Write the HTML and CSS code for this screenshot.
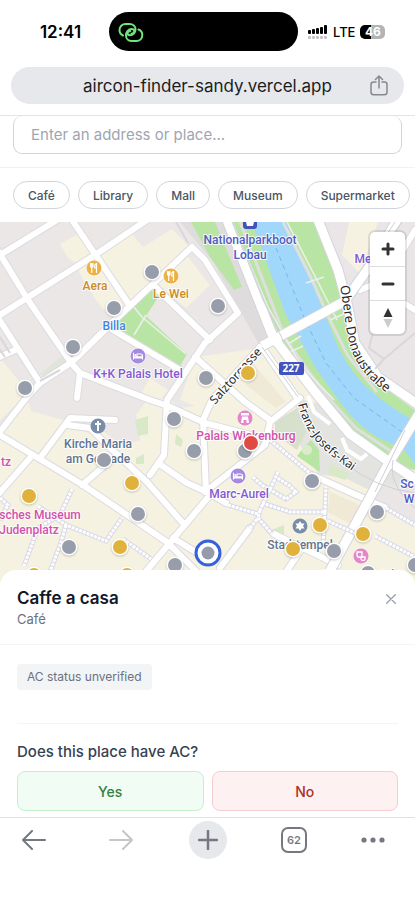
FILE: index.html
```html
<!DOCTYPE html>
<html lang="en">
<head>
<meta charset="utf-8">
<meta name="viewport" content="width=device-width, initial-scale=1">
<title>Aircon Finder</title>
<link rel="stylesheet" href="styles.css">
</head>
<body>
<div class="status">
  <time class="clock">12:41</time>
  <div class="island">
    <svg width="26" height="22" viewBox="0 0 26 22" fill="none" stroke="#6fe57c" stroke-width="2" stroke-linecap="round" aria-hidden="true">
      <path d="M5 13.500C2.800 12.500 1.500 10.400 1.500 8C1.500 4.500 4.200 2 7.500 2H11.500C15 2 17.500 4.300 17.500 7.500S15 13.300 12 13.300C10.300 13.300 9.500 12.500 9.500 11.300C9.500 9.800 10.800 9.200 12.300 9"/>
      <path d="M20.500 7.500C22.800 8.300 24.300 10.400 24.300 13C24.300 16.500 21.700 19 18.300 19H14C10.500 19 8 16.600 8 13.400C8 10 10.500 7 13.500 7C15.200 7 16.300 7.800 16.300 9.200C16.300 10.700 15 11.500 13.500 11.700"/>
    </svg>
  </div>
  <div class="signals">
    <svg width="20" height="14" viewBox="0 0 20 14" aria-hidden="true">
      <g fill="#000"><rect y="5" width="3" height="4" rx="1"/><rect x="4" y="4" width="3" height="5" rx="1"/><rect x="8" y="3" width="3" height="6" rx="1"/><rect x="12" y="2" width="3" height="7" rx="1"/><rect x="16" y="0" width="3" height="9" rx="1"/></g>
      <g fill="#c4c4c4"><rect y="11" width="3" height="3" rx="1"/><rect x="4" y="11" width="3" height="3" rx="1"/><rect x="8" y="11" width="3" height="3" rx="1"/><rect x="12" y="11" width="3" height="3" rx="1"/><rect x="16" y="11" width="3" height="3" rx="1"/></g>
    </svg>
    <span class="lte">LTE</span>
    <span class="battery">46</span>
  </div>
</div>
<div class="address">
  <span class="url">aircon-finder-sandy.vercel.app</span>
  <button class="share" type="button" aria-label="Share">
    <svg width="18" height="21" viewBox="0 0 18 21" fill="none" stroke="#85888d" stroke-width="1.500" stroke-linecap="round" stroke-linejoin="round"><path d="M6 7H3.500C2 7 1 8 1 9.500V17C1 18.700 2 19.800 3.700 19.800H14.300C16 19.800 17 18.700 17 17V9.500C17 8 16 7 14.500 7H12M9 13V1.200M5.500 4.500L9 1L12.500 4.500"/></svg>
  </button>
</div>
<form class="search">
  <input class="search-box" type="search" placeholder="Enter an address or place..." aria-label="Address or place">
</form>
<div class="chips">
  <button class="chip" type="button">Café</button>
  <button class="chip" type="button">Library</button>
  <button class="chip" type="button">Mall</button>
  <button class="chip" type="button">Museum</button>
  <button class="chip" type="button">Supermarket</button>
</div>
<main class="map">
<svg class="map-art" viewBox="0 222 415 366" preserveAspectRatio="xMidYMin slice" role="img" aria-label="Map">
  <defs>
    <g id="food"><circle r="8" fill="#fff"/><circle r="7.500" fill="#ecb146"/><path d="M-3.500-4.500V-2C-3.500 0-1 0-1-2V-4.500M-2.250-4.500V4.500M2.500 4.500V-4.500C1-4 .5-2 .8 0H2.500" fill="none" stroke="#fff" stroke-width="1.200" stroke-linecap="round"/></g>
    <g id="bed"><circle r="8" fill="#fff"/><circle r="7.500" fill="#a58ae0"/><path d="M-4.500-3V3M-4.500 2H4.500V3M4.500 2V0C4.500-1.500 3.500-2 2.500-2H-1V2M-4.500 .8H4.500" fill="none" stroke="#fff" stroke-width="1.200" stroke-linecap="round"/><circle cx="-2.700" cy="-1" r="1" fill="#fff"/></g>
    <path id="obere" d="M340 286C345 310 345 337 354 356C362 373 374 384 394 398"/>
    <path id="kai" d="M298 404C302 420 307 430 318 443C328 454 339 462 357 474"/>
    <path id="salz" d="M215 405L266 348"/>
    <path id="roads" d="M-5 258L57 220M-5 318L95 255L147 220M72 220L128 303M-5 246L28 300L72 364L80 373L150 400L168 406L205 423L270 440M40 383L72 362L115 320L192 247M40 383L27 397L-5 438M-5 313L40 383M153 285L210 340M113 330L180 370M192 247L205 260L238 313L205 343L167 400L164 455L150 475M195 357L245 402L270 420M80 373L77 398M-5 359L15 350M260 347L212 400L203 420L206 492M-5 432L83 485L167 542L200 575M-5 498L30 458M40 458L70 418L115 420M67 425L90 428L107 445L147 482L182 522M82 485L103 467M210 495L143 575M158 463L187 483L207 492L226 503M173 538L212 562M205 492L265 445L270 422L300 398M312 475L372 502L386 508M250 528L220 568M274 534L338 565M302 548L284 575M262 347L298 399M372 284L415 310M415 230L385 280L360 290"/>
    <path id="walks" d="M72 489L60 515L38 528L24 566M38 506L66 525L106 541L122 518M66 525L60 545L50 572M123 539L151 559M0 498L8 505L0 520M270 440L312 475M278 472L274 481L260 510M253 477L262 485L286 499L296 492L290 486L276 477M228 505L258 514M262 503L290 512H325L326 487M325 512L323 545M328 521L357 534M260 510L258 518L272 534M250 528L258 518M386 508L415 525M375 536L415 557"/>
  </defs>
  <rect y="222" width="415" height="366" fill="#f6f2e1"/>
  <path fill="#ebe7e6" d="M0 222H200L262 348L208 404L180 408L170 400L150 396L136 415L140 440L122 446L104 432L88 433L70 422L31 411L27 397L0 432Z"/>
  <path fill="#f6f2e1" d="M60 244L82 232L128 303L112 320L96 300L82 277L74 262L68 258ZM96 252L130 232L143 247L172 229L190 247L153 284L128 303ZM170 272L188 257L210 285L186 308L158 284ZM0 358L18 380L32 390L0 420ZM195 357L262 348L205 410L180 400ZM150 378L168 390L158 403L140 395Z"/>
  <path fill="#dfe5d9" d="M40 374L62 356L68 365L50 379Z"/>
  <path fill="#e3e4df" d="M296 398L320 404L345 435L390 468L415 482V505L365 488L345 478L318 474L297 440Z"/>
  <path fill="#d7dfcd" d="M275 422L297 408L306 432L297 450L275 434Z"/>
  <path fill="#eae5e6" d="M315 222H415V405L378 388L355 350L347 305Z"/>
  <path fill="#f6f2e1" d="M349 222H378L360 274L342 255Z"/>
  <path fill="#efe9d6" d="M330 492L372 510L358 528L328 512ZM252 362L286 402L276 408L246 385Z"/>
  <path fill="#e9e6e5" d="M372 480L415 490V525L368 500Z"/>
  <path fill="#dfdcde" d="M180 222H226L280 340L262 350L213 262Z"/>
  <path fill="#b9e5a4" d="M191 222H215L242 287L234 290L210 257ZM118 318L152 290L159 296L146 316L187 354L179 368L112 330Z"/>
  <path fill="#d9e8c7" d="M135 420L148 416V434L138 436ZM136 458L144 454V464H136ZM176 434L183 440L181 447L175 444ZM266 532L284 525V535ZM330 464L350 474L345 480L328 474Z"/>
  <path fill="#b9e5a4" d="M300 452L311 440L319 450L320 472L297 456Z"/>
  <circle cx="307" cy="450" r="5" fill="#dcebc9"/>
  <path fill="#b9e5a4" d="M229 222H320L345 300L353 348L376 382L415 410V470L388 464L345 425L315 396L280 338Z"/>
  <path fill="#a0d7fa" d="M252 222H286L315 290L338 347C350 370 365 394 415 421V464L402 447C375 440 355 424 335 395L315 367L285 313Z"/>
  <path fill="none" stroke="#79b8e8" stroke-dasharray="5 4" d="M276 248L306 322L326 363L354 398L402 432"/>
  <path fill="none" stroke="#dfdfdf" stroke-width="3" d="M283 222L312 280L331 322L348 356L377 392M240 222L262 278L286 340L325 394L356 428L398 456"/>
  <path fill="none" stroke="#eee" stroke-width="1.500" d="M287 222L318 282L337 320M232 222L268 307L300 364L334 400M306 283L324 277M330 320L344 314M288 344L301 336M290 352L303 346M146 315L134 335M133 306L142 317L186 354"/>
  <g fill="none" stroke-linecap="round" stroke-linejoin="round">
    <use href="#roads" stroke="#dcdbe1" stroke-width="8"/>
    <use href="#roads" stroke="#fff" stroke-width="6"/>
  </g>
  <g fill="none" stroke-linejoin="round">
    <path stroke="#d5d4dd" stroke-width="11" d="M225 215L273 337L315 392L350 434L392 464L420 482M316 215L338 270L348 307L355 343L378 377L420 406M262 346L345 301L372 263L400 215M420 412L386 468L325 580"/>
    <path stroke="#fff" stroke-width="9" d="M225 215L273 337L315 392L350 434L392 464L420 482M316 215L338 270L348 307L355 343L378 377L420 406M262 346L345 301L372 263L400 215M420 412L386 468L325 580"/>
    <path stroke="#fff" stroke-width="4" d="M308 396L314 412L330 424M342 438L347 450L361 459L367 454"/>
    <path stroke="#d1cfd7" d="M232 222L263 300L284 342M262 347L298 397M345 463Q375 488 415 493M393 460Q388 485 415 508M405 430L375 492M372 263L402 222M368 264L395 222"/>
    <path stroke="#dad7db" stroke-width="2" d="M374 328L369 348L384 359L415 333M384 359L375 369M60 370L40 381M0 337L10 353M-2 347L5 357M176 222L188 243"/>
  </g>
  <use href="#walks" fill="none" stroke="#d9d9e8" stroke-width="5"/>
  <use href="#walks" fill="none" stroke="#fff" stroke-width="3" stroke-dasharray="3 1"/>

  <g><rect x="243" y="216" width="14" height="13" rx="3" fill="#4253bd"/><path d="M246 222H254L253 226H247Z" fill="#fff"/></g>
  <use href="#food" x="94" y="268"/><use href="#food" x="171" y="276"/>
  <use href="#bed" x="138" y="356"/><use href="#bed" x="238" y="476"/>
  <circle cx="98" cy="426" r="7.500" fill="#778da8"/><path d="M98 421V431M95 424H101" stroke="#fff" stroke-width="2"/>
  <circle cx="245" cy="418" r="7.500" fill="#e386ca"/><path d="M241 413H249V415.500H241ZM242 416.500H248L249 423H246.500V420H243.500V423H241Z" fill="#fff"/>
  <circle cx="300" cy="526" r="7.500" fill="#778da8"/><path d="M300 521L301.500 523.500H304.500L303 526L304.500 528.500H301.500L300 531L298.500 528.500H295.500L297 526L295.500 523.500H298.500Z" fill="#fff"/>
  <circle cx="361" cy="556" r="7.500" fill="#e386ca"/><path d="M357 552H362V555C362 558 357 558 357 555ZM361 557H365V559C365 561 361 561 361 559Z" fill="none" stroke="#fff" stroke-width="1.300"/>
  <rect x="279" y="362" width="25" height="13" rx="2" fill="#4253bd"/>

  <g class="label" text-anchor="middle">
    <text class="transit" x="250" y="244">Nationalparkboot</text><text class="transit" x="250" y="259">Lobau</text>
    <text class="food" x="95" y="290">Aera</text><text class="food" x="171" y="298">Le Wei</text>
    <text class="shop" x="114" y="330">Billa</text>
    <text class="hotel" x="138" y="378">K+K Palais Hotel</text><text class="hotel" x="239" y="498">Marc-Aurel</text>
    <text class="hotel" x="363" y="263">Me</text>
    <text class="church" x="98" y="448">Kirche Maria</text><text class="church" x="98" y="463">am Gestade</text>
    <text class="church" x="300" y="549">Stadttempel</text>
    <text class="museum" x="246" y="440">Palais Wickenburg</text>
    <text class="museum" x="6" y="466">tz</text>
    <text class="museum" x="40" y="519">sches Museum</text><text class="museum" x="29" y="534">Judenplatz</text>
    <text class="museum" x="362" y="579">Kammerspiele</text>
    <text class="transit" x="407" y="488">Sc</text><text class="transit" x="409" y="503">W</text>
  </g>
  <g class="street">
    <text><textPath href="#obere">Obere Donaustraße</textPath></text>
    <text class="small"><textPath href="#kai">Franz-Josefs-Kai</textPath></text>
    <text class="small"><textPath href="#salz">Salztorgasse</textPath></text>
  </g>
  <text class="shield" x="291" y="372" text-anchor="middle">227</text>

  <g class="pins">
    <g class="unknown"><circle cx="152" cy="272" r="7"/><circle cx="114" cy="308" r="7"/><circle cx="218" cy="306" r="7"/><circle cx="73" cy="347" r="7"/><circle cx="25" cy="388" r="7"/><circle cx="206" cy="378" r="7"/><circle cx="174" cy="419" r="7"/><circle cx="194" cy="451" r="7"/><circle cx="245" cy="451" r="7"/><circle cx="104" cy="460" r="7"/><circle cx="312" cy="481" r="7"/><circle cx="138" cy="514" r="7"/><circle cx="377" cy="512" r="7"/><circle cx="69" cy="547" r="7"/><circle cx="334" cy="551" r="7"/><circle cx="175" cy="565" r="7"/><circle cx="368" cy="573" r="7"/><circle cx="415" cy="565" r="7"/></g>
    <g class="cool"><circle cx="248" cy="373" r="7"/><circle cx="132" cy="483" r="7"/><circle cx="29" cy="496" r="7"/><circle cx="120" cy="547" r="7"/><circle cx="320" cy="525" r="7"/><circle cx="363" cy="534" r="7"/><circle cx="293" cy="549" r="7"/><circle cx="34" cy="575" r="7"/><circle cx="127" cy="575" r="7"/></g>
    <circle class="warm" cx="251" cy="443" r="7"/>
    <circle cx="208" cy="553" r="12" fill="#fff" stroke="#3561dc" stroke-width="3"/><circle cx="208" cy="553" r="6.500" fill="#969ba9"/>
  </g>
</svg>
<div class="zoom">
  <button type="button" aria-label="Zoom in"><svg width="16" height="16" viewBox="0 0 16 16"><path d="M8 3V13M3 8H13" stroke="#333" stroke-width="3" stroke-linecap="round"/></svg></button>
  <button type="button" aria-label="Zoom out"><svg width="16" height="16" viewBox="0 0 16 16"><path d="M3 8H13" stroke="#333" stroke-width="3" stroke-linecap="round"/></svg></button>
  <button type="button" aria-label="Reset north"><svg width="10" height="22" viewBox="0 0 10 22"><path d="M.5 10L5 1L9.500 10Z" fill="#333"/><path d="M.5 12L5 21L9.500 12Z" fill="#ccc"/></svg></button>
</div>
</main>
<section class="sheet">
  <header class="sheet-head">
    <div>
      <h1>Caffe a casa</h1>
      <p class="kind">Café</p>
    </div>
    <button class="close" type="button" aria-label="Close"><svg width="10" height="10" viewBox="0 0 10 10"><path d="M.7 .7L9.300 9.300M9.300 .7L.7 9.300" stroke="#989ea9" stroke-width="1.300" stroke-linecap="round"/></svg></button>
  </header>
  <div class="sheet-body">
    <span class="badge">AC status unverified</span>
    <div class="vote">
      <h2>Does this place have AC?</h2>
      <div class="answers">
        <button class="yes" type="button">Yes</button>
        <button class="no" type="button">No</button>
      </div>
    </div>
  </div>
</section>
<nav class="toolbar">
  <button type="button" aria-label="Back"><svg width="24" height="20" viewBox="0 0 24 20" fill="none" stroke="#75797f" stroke-width="2" stroke-linecap="round" stroke-linejoin="round"><path d="M23 10H1M10 1L1 10L10 19"/></svg></button>
  <button type="button" aria-label="Forward"><svg width="24" height="20" viewBox="0 0 24 20" fill="none" stroke="#c5c6c8" stroke-width="2" stroke-linecap="round" stroke-linejoin="round"><path d="M1 10H23M14 1L23 10L14 19"/></svg></button>
  <button class="add" type="button" aria-label="New tab"><svg width="20" height="20" viewBox="0 0 20 20"><path d="M10 1V19M1 10H19" stroke="#75797f" stroke-width="2.500" stroke-linecap="round"/></svg></button>
  <button type="button" aria-label="Tabs"><span class="tabs">62</span></button>
  <button class="more" type="button" aria-label="More"><svg width="24" height="6" viewBox="0 0 24 6" fill="#75797f"><circle cx="3" cy="3" r="2.600"/><circle cx="12" cy="3" r="2.600"/><circle cx="21" cy="3" r="2.600"/></svg></button>
</nav>
</body>
</html>
```
FILE: styles.css
```css
* { box-sizing: border-box; }
body {
  margin: 0;
  min-height: 100vh;
  display: flex;
  flex-direction: column;
  background: #fff;
  font-family: Inter, "Liberation Sans", sans-serif;
  color: #374151;
}
button {
  font: inherit;
  padding: 0;
  border: 0;
  background: none;
  color: inherit;
}
svg { display: block; flex: none; }
h1, h2, p { margin: 0; }

.status {
  display: grid;
  grid-template-columns: 1fr 189px 1fr;
  align-items: center;
  padding: 12px 8px 12px 0;
}
.clock {
  padding-left: 12px;
  text-align: center;
  font-size: 17px;
  font-weight: 600;
  color: #000;
}
.island {
  height: 39px;
  padding: 10px 9px;
  border-radius: 20px;
  background: #000;
}
.signals {
  display: flex;
  align-items: center;
  gap: 5px;
  padding-left: 10px;
}
.lte {
  font-size: 13px;
  font-weight: 500;
  color: #000;
}
.battery {
  width: 25px;
  height: 14px;
  border-radius: 5px;
  background: linear-gradient(90deg, #000 46%, #b4b4b4 46%);
  color: #fff;
  font-size: 12px;
  line-height: 14px;
  font-weight: 700;
  text-align: center;
}

.address {
  display: grid;
  grid-template-columns: 18px 1fr 18px;
  align-items: center;
  height: 37px;
  margin: 4px 11px 11px;
  padding: 0 16px;
  border-radius: 19px;
  background: #e7e8ec;
}
.url {
  grid-column: 2;
  text-align: center;
  font-size: 17px;
  color: #1c1c1e;
}

.search {
  padding: 0 13px 13px;
  border-top: 1px solid #e3e4e6;
  border-bottom: 1px solid #f1f2f4;
}
.search-box {
  display: block;
  width: 100%;
  height: 38px;
  padding: 0 17px;
  border: 1px solid #d1d5db;
  border-top: 0;
  border-radius: 9px;
  background: #fff;
  font: 15px Inter, "Liberation Sans", sans-serif;
  color: #374151;
}
.search-box::placeholder { color: #a0a5b0; }

.chips {
  display: flex;
  gap: 8px;
  padding: 13px 5px 13px 13px;
  overflow: hidden;
}
.chip {
  flex: none;
  height: 28px;
  padding: 0 14px;
  border: 1px solid #d1d5db;
  border-radius: 14px;
  background: #fff;
  font-size: 12px;
  font-weight: 500;
  color: #4b5563;
}

.map {
  position: relative;
  flex: 1;
  min-height: 300px;
  overflow: hidden;
}
.map-art {
  position: absolute;
  width: 100%;
  height: 100%;
}
.label text {
  font: 500 12px Roboto, "Liberation Sans", sans-serif;
  paint-order: stroke;
  stroke: #fff;
  stroke-opacity: 0.8;
  stroke-width: 2px;
}
.label .transit { fill: #4e5cc4; }
.label .food { fill: #cb8b25; }
.label .shop { fill: #4285dd; }
.label .hotel { fill: #8558d6; }
.label .church { fill: #5e7594; }
.label .museum { fill: #d252ad; }
.street text {
  font: 13px "Noto Sans", sans-serif;
  fill: #29292c;
  paint-order: stroke;
  stroke: #fff;
  stroke-width: 2px;
}
.street .small { font-size: 12px; }
.shield {
  font: 700 10px "Noto Sans", sans-serif;
  fill: #fff;
}
.pins .unknown, .pins .cool, .pins .warm {
  paint-order: stroke;
  stroke: #fff;
  stroke-width: 3px;
  filter: drop-shadow(0 1px 1px rgb(0 0 0 / 0.2));
}
.unknown { fill: #989dab; }
.cool { fill: #e0b23c; }
.warm { fill: #df4b43; }

.zoom {
  position: absolute;
  top: 10px;
  right: 10px;
  width: 35px;
  border-radius: 5px;
  background: #fff;
  box-shadow: 0 0 0 2px rgb(0 0 0 / 0.1);
}
.zoom button {
  display: grid;
  place-items: center;
  width: 100%;
  height: 34px;
}
.zoom button + button { border-top: 1px solid #ddd; }

.sheet {
  position: relative;
  margin-top: -16px;
  border-radius: 16px 16px 0 0;
  background: #fff;
}
.sheet-head {
  display: flex;
  justify-content: space-between;
  padding: 16px 19px 17px 17px;
  border-bottom: 1px solid #f3f4f6;
}
h1 {
  font-size: 17px;
  line-height: 25px;
  font-weight: 600;
  color: #111827;
}
.kind {
  font-size: 13px;
  line-height: 16px;
  color: #6b7280;
}
.close {
  display: grid;
  place-items: center;
  align-self: flex-start;
  height: 26px;
}
.sheet-body { padding: 19px 17px 6px; }
.badge {
  display: inline-block;
  padding: 0 10px;
  border-radius: 4px;
  background: #f3f4f6;
  font-size: 12px;
  line-height: 26px;
  color: #6b7280;
}
.vote {
  margin-top: 33px;
  padding-top: 17px;
  border-top: 1px solid #f3f4f6;
}
h2 {
  font-size: 15px;
  line-height: 22px;
  font-weight: 500;
}
.answers {
  display: grid;
  grid-template-columns: 1fr 1fr;
  gap: 8px;
  margin-top: 8px;
}
.answers button {
  height: 40px;
  border: 1px solid;
  border-radius: 8px;
  font-size: 14px;
  font-weight: 500;
}
.answers .yes { background: #f1fcf4; border-color: #c3f0d0; color: #35803f; }
.answers .no { background: #fdf1f1; border-color: #f6cccf; color: #ac3028; }

.toolbar {
  display: grid;
  grid-template-columns: 68fr 106fr 67fr 106fr 68fr;
  padding: 3px 0 41px;
  border-top: 1px solid #e1e2e4;
}
.toolbar button {
  display: grid;
  place-items: center;
  height: 38px;
}
.toolbar .add {
  width: 38px;
  justify-self: center;
  border-radius: 50%;
  background: #e7e8ec;
}
.toolbar .more { padding-right: 16px; }
.tabs {
  width: 26px;
  height: 26px;
  border: 2px solid #75797f;
  border-radius: 7px;
  font-size: 11px;
  line-height: 22px;
  font-weight: 600;
  color: #75797f;
}
```
